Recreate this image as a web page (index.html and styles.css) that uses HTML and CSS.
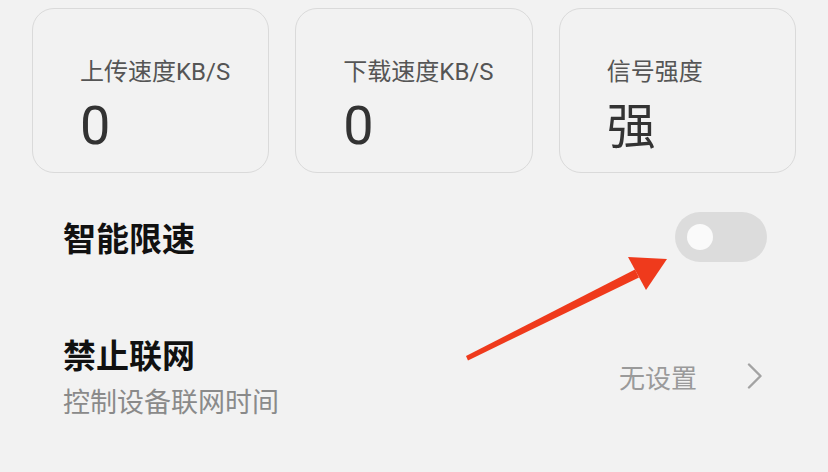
FILE: index.html
```html
<!DOCTYPE html>
<html lang="zh">
<head>
<meta charset="utf-8">
<link rel="stylesheet" href="styles.css">
</head>
<body>
<div class="page">
  <div class="cards">
    <div class="card">
      <div class="card-label">上传速度KB/S</div>
      <div class="card-value">0</div>
    </div>
    <div class="card">
      <div class="card-label">下载速度KB/S</div>
      <div class="card-value">0</div>
    </div>
    <div class="card">
      <div class="card-label">信号强度</div>
      <div class="card-value cjk">强</div>
    </div>
  </div>
  <div class="row row-speed">
    <div class="row-title">智能限速</div>
    <div class="toggle"><div class="knob"></div></div>
  </div>
  <div class="row row-block">
    <div class="row-text">
      <div class="row-title">禁止联网</div>
      <div class="row-sub">控制设备联网时间</div>
    </div>
    <div class="row-right">
      <span class="row-value">无设置</span>
      <svg class="chev" width="16" height="26" viewBox="0 0 16 26"><path d="M2 1.5 L13.5 13 L2 24.5" fill="none" stroke="#a3a3a3" stroke-width="2.4" stroke-linecap="round" stroke-linejoin="round"/></svg>
    </div>
  </div>
  <svg class="arrow" width="828" height="472" viewBox="0 0 828 472">
    <polygon points="466,356 635,269.5 639,277.5 468,360.5" fill="#ef3a1c"/>
    <polygon points="628,257 667,259 646,290" fill="#ef3a1c"/>
  </svg>
</div>
</body>
</html>
```

FILE: styles.css
```css
html, body {
  margin: 0;
  padding: 0;
}
body {
  background: #f2f2f2;
  font-family: "Noto Sans CJK SC", "Noto Sans", sans-serif;
  width: 828px;
  height: 472px;
  overflow: hidden;
}
.page {
  position: relative;
  width: 828px;
  height: 472px;
}
.cards {
  display: grid;
  grid-template-columns: repeat(3, 1fr);
  gap: 26px;
  padding: 8px 32px 0 32px;
}
.card {
  box-sizing: border-box;
  height: 165px;
  border: 1.5px solid #dadada;
  border-radius: 22px;
  padding: 48px 0 0 47px;
}
.card-label {
  font-family: Roboto, "Noto Sans CJK SC", sans-serif;
  font-size: 24px;
  line-height: 30px;
  color: #555;
}
.card-value {
  font-family: Roboto, "Noto Sans CJK SC", sans-serif;
  font-size: 54px;
  line-height: 60px;
  color: #333;
  margin-top: 9px;
}
.card-value.cjk {
  font-family: "Noto Sans CJK SC", sans-serif;
  font-size: 49px;
  margin-top: 6px;
}
.row {
  display: flex;
  align-items: center;
  justify-content: space-between;
  padding: 0 61px 0 63px;
}
.row-speed {
  height: 128px;
}
.row-block {
  height: 150px;
}
.row-title {
  font-size: 33px;
  font-weight: 700;
  color: #111;
  line-height: 40px;
}
.row-sub {
  font-size: 27px;
  color: #8a8a8a;
  line-height: 34px;
  margin-top: 10px;
}
.toggle {
  width: 92px;
  height: 50px;
  border-radius: 25px;
  background: #dcdcdc;
  display: flex;
  align-items: center;
  padding-left: 12px;
  box-sizing: border-box;
}
.knob {
  width: 26px;
  height: 26px;
  border-radius: 50%;
  background: #fafafa;
}
.row-right {
  display: flex;
  align-items: center;
  gap: 50px;
  padding-right: 4px;
}
.row-value {
  font-size: 26px;
  color: #9a9a9a;
}
.arrow {
  position: absolute;
  left: 0;
  top: 0;
  pointer-events: none;
}
```
